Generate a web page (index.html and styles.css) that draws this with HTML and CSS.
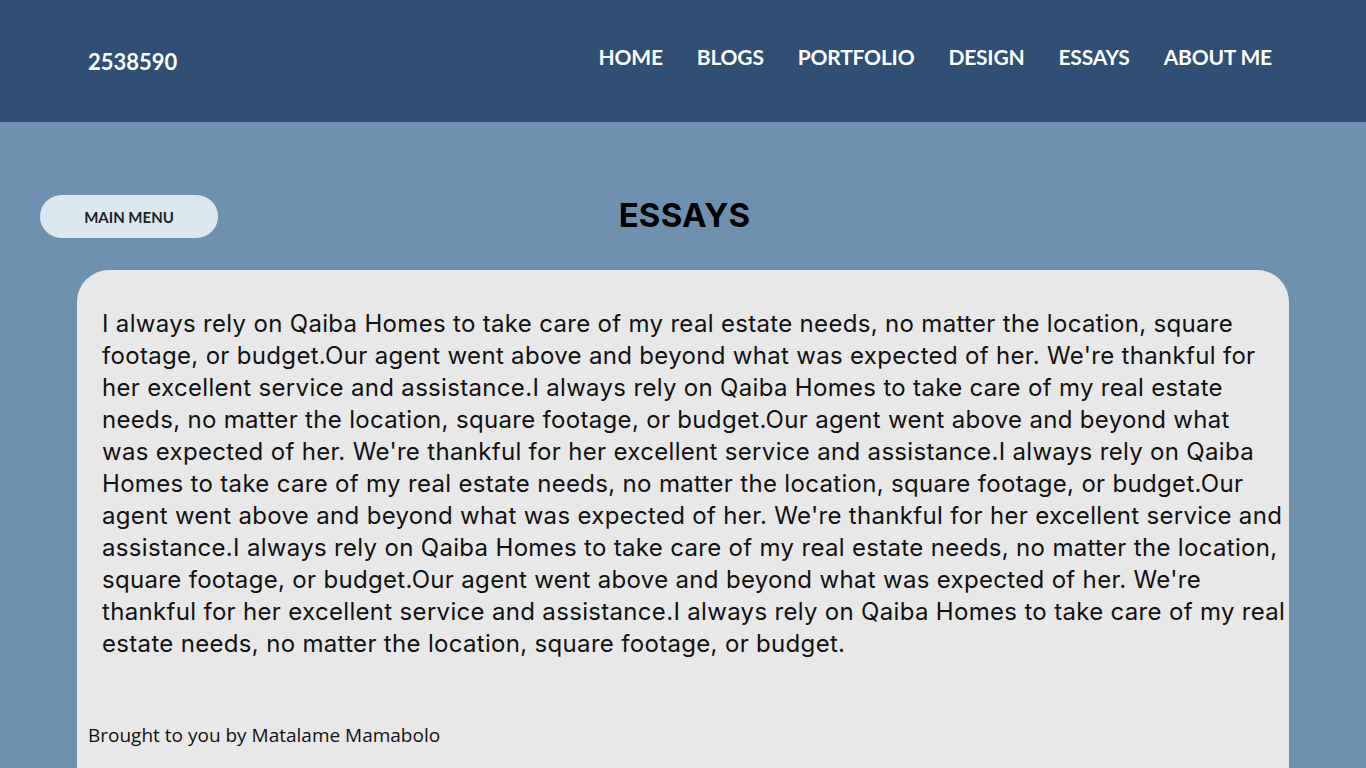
FILE: index.html
```html
<!DOCTYPE html>
<html lang="en">
<head>
<meta charset="utf-8">
<title>Essays</title>
<link rel="stylesheet" href="styles.css">
</head>
<body>
<header class="topbar">
  <div class="logo">2538590</div>
  <nav class="nav">
    <a href="#">HOME</a>
    <a href="#">BLOGS</a>
    <a href="#">PORTFOLIO</a>
    <a href="#">DESIGN</a>
    <a href="#">ESSAYS</a>
    <a href="#">ABOUT ME</a>
  </nav>
</header>
<main class="content">
  <div class="title-row">
    <a class="menu-btn" href="#">MAIN MENU</a>
    <h1 class="title">ESSAYS</h1>
  </div>
  <section class="card">
    <p class="essay">I always rely on Qaiba Homes to take care of my real estate needs, no matter the location, square<br>
footage, or budget.Our agent went above and beyond what was expected of her. We're thankful for<br>
her excellent service and assistance.I always rely on Qaiba Homes to take care of my real estate<br>
needs, no matter the location, square footage, or budget.Our agent went above and beyond what<br>
was expected of her. We're thankful for her excellent service and assistance.I always rely on Qaiba<br>
Homes to take care of my real estate needs, no matter the location, square footage, or budget.Our<br>
agent went above and beyond what was expected of her. We're thankful for her excellent service and<br>
assistance.I always rely on Qaiba Homes to take care of my real estate needs, no matter the location,<br>
square footage, or budget.Our agent went above and beyond what was expected of her. We're<br>
thankful for her excellent service and assistance.I always rely on Qaiba Homes to take care of my real<br>
estate needs, no matter the location, square footage, or budget.</p>
    <p class="credit">Brought to you by Matalame Mamabolo</p>
  </section>
</main>
</body>
</html>
```
FILE: styles.css
```css
html, body {
  margin: 0;
  padding: 0;
}
body {
  background: #6f91b0;
  font-family: "Open Sans", "DejaVu Sans", sans-serif;
  height: 768px;
  overflow: hidden;
}
.topbar {
  height: 122px;
  background: #2f4f74;
  display: flex;
  align-items: center;
  justify-content: space-between;
  padding: 0 94px 0 88px;
  box-sizing: border-box;
}
.logo {
  color: #fff;
  font-family: "Lato", sans-serif;
  font-weight: 700;
  font-size: 22px;
  margin-top: 0;
}
.nav {
  display: flex;
  gap: 34px;
  margin-top: -10px;
}
.nav a {
  color: #fff;
  text-decoration: none;
  font-family: "Lato", sans-serif;
  font-weight: 700;
  font-size: 21px;
  letter-spacing: -0.2px;
}
.content {
  padding: 73px 77px 0 40px;
}
.title-row {
  position: relative;
  height: 43px;
  display: flex;
  align-items: center;
}
.menu-btn {
  width: 178px;
  height: 43px;
  border-radius: 22px;
  background: #dbe8f0;
  color: #222;
  text-decoration: none;
  font-family: "Lato", sans-serif;
  font-weight: 700;
  font-size: 15px;
  display: flex;
  align-items: center;
  justify-content: center;
}
.title {
  position: absolute;
  left: 0;
  right: -40px;
  top: -1px;
  margin: 0;
  text-align: center;
  font-family: "Inter", sans-serif;
  font-weight: 700;
  font-size: 33px;
  line-height: 43px;
  letter-spacing: 0.2px;
  color: #000;
}
.card {
  margin: 32px 0 0 37px;
  background: #e8e8e8;
  border-radius: 32px 32px 0 0;
  height: 520px;
  padding: 38px 0 0 11px;
  box-sizing: border-box;
}
.essay {
  margin: 0 0 0 14px;
  font-family: "Inter", sans-serif;
  font-size: 24px;
  line-height: 32px;
  letter-spacing: 0.32px;
  color: #111;
}
.credit {
  margin: 62px 0 0 0;
  font-family: "Open Sans", sans-serif;
  font-size: 19px;
  color: #111;
}
```
